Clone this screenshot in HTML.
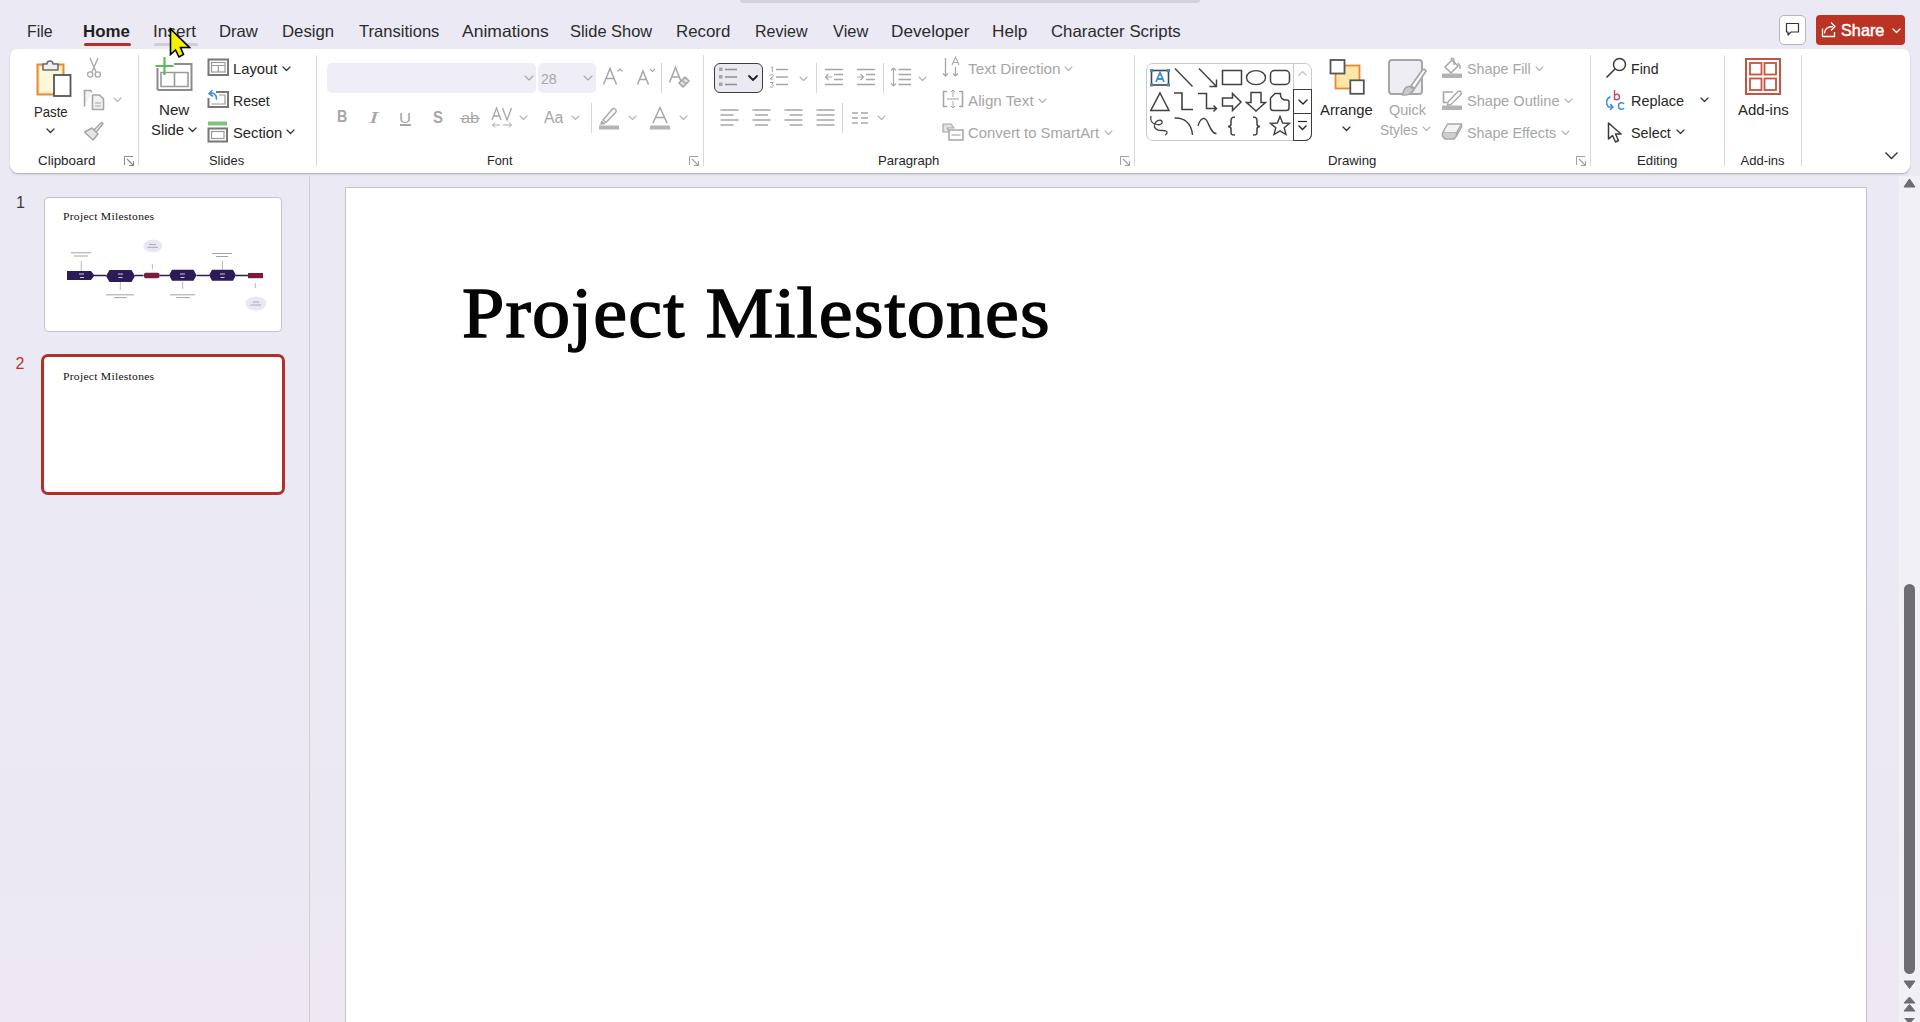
<!DOCTYPE html>
<html><head><meta charset="utf-8">
<style>
*{margin:0;padding:0;box-sizing:border-box}
html,body{width:1920px;height:1022px;overflow:hidden}
body{background:linear-gradient(#ebe9f4 0%,#ebe9f3 50%,#ede8f2 100%);font-family:"Liberation Sans",sans-serif;color:#262626;position:relative}
.a{position:absolute;white-space:nowrap}
svg.a{overflow:visible}
</style></head><body>
<div class="a" style="left:740px;top:0px;width:460px;height:3px;background:#d3d2d9;border-radius:0 0 3px 3px"></div>
<div class="a" style="left:26.54px;top:22.83px;font-size:16.5px;line-height:16.5px;color:#2b2b2b;font-weight:normal;font-family:'Liberation Sans',sans-serif;;transform-origin:0 0;transform:scaleX(0.9640);">File</div>
<div class="a" style="left:152.96px;top:22.83px;font-size:16.5px;line-height:16.5px;color:#2b2b2b;font-weight:normal;font-family:'Liberation Sans',sans-serif;;transform-origin:0 0;transform:scaleX(1.0415);">Insert</div>
<div class="a" style="left:219.49px;top:22.83px;font-size:16.5px;line-height:16.5px;color:#2b2b2b;font-weight:normal;font-family:'Liberation Sans',sans-serif;;transform-origin:0 0;transform:scaleX(1.0105);">Draw</div>
<div class="a" style="left:282.18px;top:22.83px;font-size:16.5px;line-height:16.5px;color:#2b2b2b;font-weight:normal;font-family:'Liberation Sans',sans-serif;;transform-origin:0 0;transform:scaleX(1.0160);">Design</div>
<div class="a" style="left:358.50px;top:22.83px;font-size:16.5px;line-height:16.5px;color:#2b2b2b;font-weight:normal;font-family:'Liberation Sans',sans-serif;;transform-origin:0 0;transform:scaleX(1.0038);">Transitions</div>
<div class="a" style="left:461.90px;top:22.83px;font-size:16.5px;line-height:16.5px;color:#2b2b2b;font-weight:normal;font-family:'Liberation Sans',sans-serif;;transform-origin:0 0;transform:scaleX(1.0617);">Animations</div>
<div class="a" style="left:570.20px;top:22.83px;font-size:16.5px;line-height:16.5px;color:#2b2b2b;font-weight:normal;font-family:'Liberation Sans',sans-serif;;transform-origin:0 0;transform:scaleX(0.9963);">Slide Show</div>
<div class="a" style="left:676.48px;top:22.83px;font-size:16.5px;line-height:16.5px;color:#2b2b2b;font-weight:normal;font-family:'Liberation Sans',sans-serif;;transform-origin:0 0;transform:scaleX(1.0216);">Record</div>
<div class="a" style="left:754.63px;top:22.83px;font-size:16.5px;line-height:16.5px;color:#2b2b2b;font-weight:normal;font-family:'Liberation Sans',sans-serif;;transform-origin:0 0;transform:scaleX(0.9698);">Review</div>
<div class="a" style="left:832.50px;top:22.83px;font-size:16.5px;line-height:16.5px;color:#2b2b2b;font-weight:normal;font-family:'Liberation Sans',sans-serif;;transform-origin:0 0;transform:scaleX(0.9944);">View</div>
<div class="a" style="left:890.86px;top:22.83px;font-size:16.5px;line-height:16.5px;color:#2b2b2b;font-weight:normal;font-family:'Liberation Sans',sans-serif;;transform-origin:0 0;transform:scaleX(1.0419);">Developer</div>
<div class="a" style="left:991.96px;top:22.83px;font-size:16.5px;line-height:16.5px;color:#2b2b2b;font-weight:normal;font-family:'Liberation Sans',sans-serif;;transform-origin:0 0;transform:scaleX(1.0394);">Help</div>
<div class="a" style="left:1051.28px;top:22.83px;font-size:16.5px;line-height:16.5px;color:#2b2b2b;font-weight:normal;font-family:'Liberation Sans',sans-serif;;transform-origin:0 0;transform:scaleX(1.0175);">Character Scripts</div>
<div class="a" style="left:83.48px;top:22.83px;font-size:16.5px;line-height:16.5px;color:#1f1f1f;font-weight:bold;font-family:'Liberation Sans',sans-serif;;transform-origin:0 0;transform:scaleX(1.0222);">Home</div>
<div class="a" style="left:84px;top:43px;width:47px;height:3px;background:#b3302b;border-radius:2px"></div>
<div class="a" style="left:154px;top:43px;width:44px;height:3px;background:#cfcdd6;border-radius:2px"></div>
<div class="a" style="left:1779px;top:15px;width:27px;height:30px;background:#fff;border:1px solid #b5b4ba;border-radius:5px"></div>
<svg class="a" style="left:1785px;top:22px;" width="16" height="16" viewBox="0 0 16 16" fill="none"><path d="M1.5 1.5 H13.5 V10 H6 L3 13 V10 H1.5 Z" stroke="#333" stroke-width="1.2" stroke-linejoin="round"/></svg>
<div class="a" style="left:1816px;top:15px;width:89px;height:30px;background:#bb3323;border-radius:4px"></div>
<svg class="a" style="left:1820px;top:20px;" width="18" height="18" viewBox="0 0 18 18" fill="none"><path d="M2.5 8.5 V16.5 H14.5 V12" stroke="#fff" stroke-width="1.3"/><path d="M4.5 13.5 C4.5 9 7.5 6.5 13 6.5" stroke="#fff" stroke-width="1.3"/><path d="M11 2.5 L15 6.5 L11 10.5" stroke="#fff" stroke-width="1.3" stroke-linejoin="round"/></svg>
<div class="a" style="left:1841.24px;top:21.91px;font-size:17px;line-height:17px;color:#ffffff;font-weight:normal;font-family:'Liberation Sans',sans-serif;-webkit-text-stroke:0.5px #fff;transform-origin:0 0;transform:scaleX(0.9568);">Share</div>
<svg class="a" style="left:1892.0px;top:27.75px;" width="9" height="5.5" viewBox="0 0 9 5.5" fill="none"><path d="M1 1 L4.5 4.5 L8 1" stroke="#fff" stroke-width="1.3" stroke-linecap="round" stroke-linejoin="round"/></svg>
<div class="a" style="left:10px;top:49px;width:1900px;height:124px;background:#fff;border-radius:8px;box-shadow:0 1px 1px rgba(0,0,0,0.18),0 2px 3px rgba(0,0,0,0.08)"></div>
<div class="a" style="left:138px;top:55px;width:1px;height:111px;background:#d9d9dd"></div>
<div class="a" style="left:316px;top:55px;width:1px;height:111px;background:#d9d9dd"></div>
<div class="a" style="left:703px;top:55px;width:1px;height:111px;background:#d9d9dd"></div>
<div class="a" style="left:1134px;top:55px;width:1px;height:111px;background:#d9d9dd"></div>
<div class="a" style="left:1590px;top:55px;width:1px;height:111px;background:#d9d9dd"></div>
<div class="a" style="left:1724px;top:55px;width:1px;height:111px;background:#d9d9dd"></div>
<div class="a" style="left:1801px;top:55px;width:1px;height:111px;background:#d9d9dd"></div>
<svg class="a" style="left:36px;top:58px;" width="36" height="40" viewBox="0 0 36 40" fill="none">
<rect x="1.5" y="6.5" width="26" height="30" fill="#fbe9b8" stroke="#e38b3c" stroke-width="2"/>
<rect x="4" y="9" width="21" height="25" fill="#fff7dc" stroke="none"/>
<path d="M7 12 V6 H11 C11 2 17 2 17 6 H22 V12 Z" fill="#f0f0f0" stroke="#6b6b6b" stroke-width="1.6" stroke-linejoin="round"/>
<rect x="18" y="17" width="16.5" height="21" fill="#fff" stroke="#555" stroke-width="1.8"/>
</svg>
<div class="a" style="left:34.02px;top:103.80px;font-size:15px;line-height:15px;color:#262626;font-weight:normal;font-family:'Liberation Sans',sans-serif;;transform-origin:0 0;transform:scaleX(0.8757);">Paste</div>
<svg class="a" style="left:46.0px;top:127.75px;" width="9" height="5.5" viewBox="0 0 9 5.5" fill="none"><path d="M1 1 L4.5 4.5 L8 1" stroke="#333" stroke-width="1.3" stroke-linecap="round" stroke-linejoin="round"/></svg>
<svg class="a" style="left:86px;top:57px;" width="16" height="22" viewBox="0 0 16 22" fill="none">
<path d="M4 1 L10 15 M12 1 L6 15" stroke="#a6a6a6" stroke-width="1.3"/>
<circle cx="4.2" cy="17.5" r="2.6" stroke="#a6a6a6" stroke-width="1.3"/>
<circle cx="11.8" cy="17.5" r="2.6" stroke="#a6a6a6" stroke-width="1.3"/></svg>
<svg class="a" style="left:83px;top:89px;" width="23" height="23" viewBox="0 0 23 23" fill="none">
<path d="M1.5 17.5 V1.5 H7.5 L9 3" stroke="#a6a6a6" stroke-width="1.6" fill="#f2f2f2"/>
<path d="M9.5 20.5 V6 H16.5 L20.5 10 V20.5 Z" stroke="#a6a6a6" stroke-width="1.6" fill="#f2f2f2" stroke-linejoin="round"/>
<path d="M12 14 H18 M12 17 H18" stroke="#a6a6a6" stroke-width="1.2"/></svg>
<svg class="a" style="left:113.3px;top:96.85px;" width="9" height="5.5" viewBox="0 0 9 5.5" fill="none"><path d="M1 1 L4.5 4.5 L8 1" stroke="#b5b5b5" stroke-width="1.1" stroke-linecap="round" stroke-linejoin="round"/></svg>
<svg class="a" style="left:83px;top:121px;" width="22" height="20" viewBox="0 0 22 20" fill="none">
<path d="M1.5 11 L9 7 L15 13 L10 19 Z" fill="#e6e6e6" stroke="#a6a6a6" stroke-width="1.5" stroke-linejoin="round"/>
<path d="M11 9 L18 2 C19 1 20.5 2.5 19.5 3.5 L13 11" stroke="#a6a6a6" stroke-width="1.6"/></svg>
<div class="a" style="left:37.60px;top:153.80px;font-size:13px;line-height:13px;color:#262626;font-weight:normal;font-family:'Liberation Sans',sans-serif;;transform-origin:0 0;transform:scaleX(1.0309);">Clipboard</div>
<svg class="a" style="left:123.5px;top:155.5px;" width="11" height="11" viewBox="0 0 11 11" fill="none"><path d="M0.5 9 V0.5 H9" stroke="#8a8a8a" stroke-width="1"/><path d="M3 3 L9.5 9.5 M5 9.5 H9.5 V5" stroke="#8a8a8a" stroke-width="1.1"/></svg>
<svg class="a" style="left:154px;top:56px;" width="40" height="36" viewBox="0 0 40 36" fill="none">
<path d="M3.5 34 V12 M3.5 34 H37.5 V8 H20" stroke="#8c8c8c" stroke-width="2"/>
<path d="M7 30.5 V16.5 H34 V30.5 Z M7 16.5 M20.5 16.5 V30.5" stroke="#9a9a9a" stroke-width="1.6"/>
<path d="M10.5 1 V19 M1.5 10 H19.5" stroke="#5fb760" stroke-width="2.2"/></svg>
<div class="a" style="left:159.39px;top:101.60px;font-size:15px;line-height:15px;color:#262626;font-weight:normal;font-family:'Liberation Sans',sans-serif;;transform-origin:0 0;transform:scaleX(1.0103);">New</div>
<div class="a" style="left:150.51px;top:122.00px;font-size:15px;line-height:15px;color:#262626;font-weight:normal;font-family:'Liberation Sans',sans-serif;;transform-origin:0 0;transform:scaleX(0.9938);">Slide</div>
<svg class="a" style="left:188.0px;top:127.44999999999999px;" width="9" height="5.5" viewBox="0 0 9 5.5" fill="none"><path d="M1 1 L4.5 4.5 L8 1" stroke="#333" stroke-width="1.2" stroke-linecap="round" stroke-linejoin="round"/></svg>
<svg class="a" style="left:207px;top:58px;" width="23" height="19" viewBox="0 0 23 19" fill="none">
<rect x="1.5" y="1.5" width="19.5" height="15.5" stroke="#777" stroke-width="2"/>
<rect x="4.5" y="4.5" width="13.5" height="9.5" stroke="#999" stroke-width="1.2"/>
<path d="M4.5 7.5 H18 M11.25 7.5 V14" stroke="#999" stroke-width="1.2"/></svg>
<div class="a" style="left:232.62px;top:61.30px;font-size:15px;line-height:15px;color:#262626;font-weight:normal;font-family:'Liberation Sans',sans-serif;;transform-origin:0 0;transform:scaleX(0.9841);">Layout</div>
<svg class="a" style="left:281.5px;top:65.75px;" width="9" height="5.5" viewBox="0 0 9 5.5" fill="none"><path d="M1 1 L4.5 4.5 L8 1" stroke="#333" stroke-width="1.2" stroke-linecap="round" stroke-linejoin="round"/></svg>
<svg class="a" style="left:207px;top:89px;" width="23" height="20" viewBox="0 0 23 20" fill="none">
<path d="M9 3 H21 V18 H1.5 V9" stroke="#777" stroke-width="2"/>
<path d="M4.5 15 H18 V6 H12" stroke="#999" stroke-width="1.2"/>
<path d="M9.5 10 C9.5 5 6 3 2.5 4.5 M2 4.5 L5 1.5 M2 4.5 L5.5 7" stroke="#3b8fd1" stroke-width="1.6" stroke-linecap="round"/></svg>
<div class="a" style="left:232.66px;top:92.90px;font-size:15px;line-height:15px;color:#262626;font-weight:normal;font-family:'Liberation Sans',sans-serif;;transform-origin:0 0;transform:scaleX(0.9368);">Reset</div>
<svg class="a" style="left:207px;top:121px;" width="23" height="22" viewBox="0 0 23 22" fill="none">
<rect x="1" y="0.5" width="19" height="4" fill="#7cc47e"/>
<rect x="1.5" y="7.5" width="18.5" height="13" stroke="#777" stroke-width="2"/>
<rect x="4.5" y="10.5" width="12.5" height="7" stroke="#999" stroke-width="1.2"/></svg>
<div class="a" style="left:232.61px;top:124.80px;font-size:15px;line-height:15px;color:#262626;font-weight:normal;font-family:'Liberation Sans',sans-serif;;transform-origin:0 0;transform:scaleX(0.9857);">Section</div>
<svg class="a" style="left:285.5px;top:129.25px;" width="9" height="5.5" viewBox="0 0 9 5.5" fill="none"><path d="M1 1 L4.5 4.5 L8 1" stroke="#333" stroke-width="1.2" stroke-linecap="round" stroke-linejoin="round"/></svg>
<div class="a" style="left:209.01px;top:153.80px;font-size:13px;line-height:13px;color:#262626;font-weight:normal;font-family:'Liberation Sans',sans-serif;;transform-origin:0 0;transform:scaleX(0.9941);">Slides</div>
<div class="a" style="left:327px;top:63px;width:209px;height:30px;background:#efedf5;border-radius:5px"></div>
<svg class="a" style="left:523.5px;top:74.5px;" width="10" height="6.0" viewBox="0 0 10 6.0" fill="none"><path d="M1 1 L5.0 5.0 L9 1" stroke="#a8a8a8" stroke-width="1.1" stroke-linecap="round" stroke-linejoin="round"/></svg>
<div class="a" style="left:538px;top:63px;width:58px;height:30px;background:#efedf5;border-radius:5px"></div>
<div class="a" style="left:541.40px;top:71.30px;font-size:15px;line-height:15px;color:#a8a8a8;font-weight:normal;font-family:'Liberation Sans',sans-serif;;transform-origin:0 0;transform:scaleX(0.9438);">28</div>
<svg class="a" style="left:582.5px;top:74.5px;" width="10" height="6.0" viewBox="0 0 10 6.0" fill="none"><path d="M1 1 L5.0 5.0 L9 1" stroke="#a8a8a8" stroke-width="1.1" stroke-linecap="round" stroke-linejoin="round"/></svg>
<svg class="a" style="left:602px;top:66px;" width="22" height="20" viewBox="0 0 22 20" fill="none"><path d="M1.5 18.5 L8 2.5 L14.5 18.5 M4 12.5 H12" stroke="#a6a6a6" stroke-width="1.5"/><path d="M15.5 5.5 L18 3 L20.5 5.5" stroke="#a6a6a6" stroke-width="1.1"/></svg>
<svg class="a" style="left:636px;top:66px;" width="22" height="20" viewBox="0 0 22 20" fill="none"><path d="M1.5 18.5 L7 5 L12.5 18.5 M3.5 13.5 H10.5" stroke="#a6a6a6" stroke-width="1.5"/><path d="M14 3 L16.5 5.5 L19 3" stroke="#a6a6a6" stroke-width="1.1"/></svg>
<div class="a" style="left:661px;top:63px;width:1px;height:30px;background:#d4d4d8"></div>
<svg class="a" style="left:668px;top:66px;" width="23" height="24" viewBox="0 0 23 24" fill="none"><path d="M1.5 16.5 L7.5 1.5 L13.5 16.5 M3.5 11 H11.5" stroke="#a6a6a6" stroke-width="1.5"/><path d="M11 17 L17 11 L21 15 L15 21 Z M14 14 L18 18" stroke="#a6a6a6" stroke-width="1.6" fill="#e3e3e3" stroke-linejoin="round"/></svg>
<div class="a" style="left:337.01px;top:109.46px;font-size:16px;line-height:16px;color:#a6a6a6;font-weight:bold;font-family:'Liberation Sans',sans-serif;;transform-origin:0 0;transform:scaleX(0.8900);">B</div>
<div class="a" style="left:368.50px;top:108.61px;font-size:17px;line-height:17px;color:#a6a6a6;font-weight:normal;font-family:'Liberation Serif',serif;font-style:italic;transform-origin:0 0;transform:scaleX(1.6667);">I</div>
<div class="a" style="left:399.39px;top:110.30px;font-size:15px;line-height:15px;color:#a6a6a6;font-weight:normal;font-family:'Liberation Sans',sans-serif;;transform-origin:0 0;transform:scaleX(1.1111);">U</div>
<div class="a" style="left:400px;top:124px;width:11px;height:1.5px;background:#a6a6a6"></div>
<div class="a" style="left:432.70px;top:109.96px;font-size:16px;line-height:16px;color:#a6a6a6;font-weight:bold;font-family:'Liberation Sans',sans-serif;;transform-origin:0 0;transform:scaleX(0.9300);">S</div>
<div class="a" style="left:461.00px;top:110.30px;font-size:15px;line-height:15px;color:#a6a6a6;font-weight:normal;font-family:'Liberation Sans',sans-serif;;transform-origin:0 0;transform:scaleX(1.0938);">ab</div>
<div class="a" style="left:460px;top:117.5px;width:20px;height:1.3px;background:#a6a6a6"></div>
<svg class="a" style="left:491px;top:107px;" width="23" height="22" viewBox="0 0 23 22" fill="none"><path d="M1 13 L5.5 1 L10 13 M3 9 H8 M11.5 1 L16 13 L20.5 1" stroke="#a6a6a6" stroke-width="1.3"/><path d="M1.5 18 H9 M1.5 18 L4 15.5 M1.5 18 L4 20.5 M12 18 H20.5 M20.5 18 L18 15.5 M20.5 18 L18 20.5" stroke="#a6a6a6" stroke-width="1"/></svg>
<svg class="a" style="left:518.5px;top:114.75px;" width="9" height="5.5" viewBox="0 0 9 5.5" fill="none"><path d="M1 1 L4.5 4.5 L8 1" stroke="#b5b5b5" stroke-width="1.1" stroke-linecap="round" stroke-linejoin="round"/></svg>
<div class="a" style="left:544.30px;top:109.96px;font-size:16px;line-height:16px;color:#a6a6a6;font-weight:normal;font-family:'Liberation Sans',sans-serif;;transform-origin:0 0;transform:scaleX(0.9850);">Aa</div>
<svg class="a" style="left:570.5px;top:114.75px;" width="9" height="5.5" viewBox="0 0 9 5.5" fill="none"><path d="M1 1 L4.5 4.5 L8 1" stroke="#b5b5b5" stroke-width="1.1" stroke-linecap="round" stroke-linejoin="round"/></svg>
<div class="a" style="left:591px;top:103px;width:1px;height:30px;background:#d4d4d8"></div>
<svg class="a" style="left:598px;top:106px;" width="24" height="24" viewBox="0 0 24 24" fill="none"><path d="M5 14 L14.5 3 C15.5 2 17.5 2.5 18 4 C18.5 5 18 6 17.5 6.5 L8 16.5 Z" stroke="#a6a6a6" stroke-width="1.4" fill="#fff"/><path d="M4 15 L3 18 L7 17.5" stroke="#a6a6a6" stroke-width="1.4" fill="#a6a6a6"/><rect x="1" y="19.5" width="20" height="4" fill="#b4b4b4"/></svg>
<svg class="a" style="left:627.5px;top:114.75px;" width="9" height="5.5" viewBox="0 0 9 5.5" fill="none"><path d="M1 1 L4.5 4.5 L8 1" stroke="#b5b5b5" stroke-width="1.1" stroke-linecap="round" stroke-linejoin="round"/></svg>
<svg class="a" style="left:649px;top:106px;" width="24" height="24" viewBox="0 0 24 24" fill="none"><path d="M4 17 L11 1.5 L18 17 M6.5 11.5 H15.5" stroke="#a6a6a6" stroke-width="1.5"/><rect x="1" y="19.5" width="20" height="4" fill="#b4b4b4"/></svg>
<svg class="a" style="left:678.5px;top:114.75px;" width="9" height="5.5" viewBox="0 0 9 5.5" fill="none"><path d="M1 1 L4.5 4.5 L8 1" stroke="#b5b5b5" stroke-width="1.1" stroke-linecap="round" stroke-linejoin="round"/></svg>
<div class="a" style="left:486.62px;top:153.80px;font-size:13px;line-height:13px;color:#262626;font-weight:normal;font-family:'Liberation Sans',sans-serif;;transform-origin:0 0;transform:scaleX(0.9800);">Font</div>
<svg class="a" style="left:689px;top:155.5px;" width="11" height="11" viewBox="0 0 11 11" fill="none"><path d="M0.5 9 V0.5 H9" stroke="#a0a0a0" stroke-width="1"/><path d="M3 3 L9.5 9.5 M5 9.5 H9.5 V5" stroke="#a0a0a0" stroke-width="1.1"/></svg>
<div class="a" style="left:714px;top:63px;width:49px;height:30px;background:#ebe9f1;border:1.3px solid #3d3d3d;border-radius:6px"></div>
<svg class="a" style="left:718px;top:66px;" width="24" height="24" viewBox="0 0 24 24" fill="none"><rect x="1" y="1.5" width="3.5" height="3.5" fill="#a5a5a5"/><rect x="1" y="9" width="3.5" height="3.5" fill="#a5a5a5"/><rect x="1" y="16.5" width="3.5" height="3.5" fill="#a5a5a5"/><path d="M7 3.5 H19 M7 11 H19 M7 18.5 H19" stroke="#8f8f8f" stroke-width="1.3"/></svg>
<svg class="a" style="left:747.5px;top:75.0px;" width="10" height="6.0" viewBox="0 0 10 6.0" fill="none"><path d="M1 1 L5.0 5.0 L9 1" stroke="#222" stroke-width="1.8" stroke-linecap="round" stroke-linejoin="round"/></svg>
<svg class="a" style="left:769px;top:66px;" width="22" height="24" viewBox="0 0 22 24" fill="none"><path d="M2 1.5 L3.3 0.8 V6 M1 10 C1 8 4.5 8 4.5 10 L1 13 H4.5 M1 16.5 H4.5 L2.5 18.5 C5 18.5 5 22 1 21" stroke="#a6a6a6" stroke-width="1"/><path d="M7 3.5 H19 M7 11 H19 M7 18.5 H19" stroke="#a6a6a6" stroke-width="1.3"/></svg>
<svg class="a" style="left:799.0px;top:75.75px;" width="9" height="5.5" viewBox="0 0 9 5.5" fill="none"><path d="M1 1 L4.5 4.5 L8 1" stroke="#b5b5b5" stroke-width="1.1" stroke-linecap="round" stroke-linejoin="round"/></svg>
<div class="a" style="left:816px;top:63px;width:1px;height:30px;background:#d4d4d8"></div>
<svg class="a" style="left:824px;top:66px;" width="21" height="24" viewBox="0 0 21 24" fill="none"><path d="M1 3.5 H19 M10 8.5 H19 M10 13.5 H19 M1 18.5 H19" stroke="#a6a6a6" stroke-width="1.3"/><path d="M8 11 H1.5 M4.5 8 L1.5 11 L4.5 14" stroke="#a6a6a6" stroke-width="1.1"/></svg>
<svg class="a" style="left:856px;top:66px;" width="21" height="24" viewBox="0 0 21 24" fill="none"><path d="M1 3.5 H19 M10 8.5 H19 M10 13.5 H19 M1 18.5 H19" stroke="#a6a6a6" stroke-width="1.3"/><path d="M1 11 H7.5 M4.5 8 L7.5 11 L4.5 14" stroke="#a6a6a6" stroke-width="1.1"/></svg>
<div class="a" style="left:883px;top:63px;width:1px;height:30px;background:#d4d4d8"></div>
<svg class="a" style="left:890px;top:66px;" width="23" height="24" viewBox="0 0 23 24" fill="none"><path d="M8.5 3.5 H21 M8.5 8.5 H21 M8.5 13.5 H21 M8.5 18.5 H21" stroke="#a6a6a6" stroke-width="1.3"/><path d="M3.5 2 V20 M1 4.5 L3.5 2 L6 4.5 M1 17.5 L3.5 20 L6 17.5" stroke="#a6a6a6" stroke-width="1.1"/></svg>
<svg class="a" style="left:918.0px;top:75.75px;" width="9" height="5.5" viewBox="0 0 9 5.5" fill="none"><path d="M1 1 L4.5 4.5 L8 1" stroke="#b5b5b5" stroke-width="1.1" stroke-linecap="round" stroke-linejoin="round"/></svg>
<svg class="a" style="left:720px;top:107px;" width="20" height="23" viewBox="0 0 20 23" fill="none"><path d="M0.5 3 H18.5 M0.5 8 H13.5 M0.5 13 H18.5 M0.5 18 H13.5 " stroke="#a6a6a6" stroke-width="1.3"/></svg>
<svg class="a" style="left:752px;top:107px;" width="20" height="23" viewBox="0 0 20 23" fill="none"><path d="M0.5 3 H18.5 M3.0 8 H16.0 M0.5 13 H18.5 M3.0 18 H16.0 " stroke="#a6a6a6" stroke-width="1.3"/></svg>
<svg class="a" style="left:784px;top:107px;" width="20" height="23" viewBox="0 0 20 23" fill="none"><path d="M0.5 3 H18.5 M5.5 8 H18.5 M0.5 13 H18.5 M5.5 18 H18.5 " stroke="#a6a6a6" stroke-width="1.3"/></svg>
<svg class="a" style="left:816px;top:107px;" width="20" height="23" viewBox="0 0 20 23" fill="none"><path d="M0.5 3 H18.5 M0.5 8 H18.5 M0.5 13 H18.5 M0.5 18 H18.5 " stroke="#a6a6a6" stroke-width="1.3"/></svg>
<div class="a" style="left:842px;top:103px;width:1px;height:30px;background:#d4d4d8"></div>
<svg class="a" style="left:851px;top:110px;" width="19" height="16" viewBox="0 0 19 16" fill="none"><path d="M1 3 H7 M10 3 H17 M1 8 H7 M10 8 H17 M1 13 H7 M10 13 H17" stroke="#a6a6a6" stroke-width="1.3"/></svg>
<svg class="a" style="left:877.0px;top:115.25px;" width="9" height="5.5" viewBox="0 0 9 5.5" fill="none"><path d="M1 1 L4.5 4.5 L8 1" stroke="#b5b5b5" stroke-width="1.1" stroke-linecap="round" stroke-linejoin="round"/></svg>
<svg class="a" style="left:942px;top:56px;" width="22" height="23" viewBox="0 0 22 23" fill="none"><path d="M3.5 2 V20 M1 17.5 L3.5 20 L6 17.5" stroke="#a6a6a6" stroke-width="1.3"/><path d="M10 9 L13.5 1 L17 9 M11 6.5 H16" stroke="#a6a6a6" stroke-width="1.1"/><path d="M13.5 11 V20 M11 17.5 L13.5 20 L16 17.5" stroke="#a6a6a6" stroke-width="1.2"/></svg>
<div class="a" style="left:968.00px;top:61.30px;font-size:15px;line-height:15px;color:#a6a6a6;font-weight:normal;font-family:'Liberation Sans',sans-serif;;transform-origin:0 0;transform:scaleX(1.0189);">Text Direction</div>
<svg class="a" style="left:1064.0px;top:65.75px;" width="9" height="5.5" viewBox="0 0 9 5.5" fill="none"><path d="M1 1 L4.5 4.5 L8 1" stroke="#b5b5b5" stroke-width="1.1" stroke-linecap="round" stroke-linejoin="round"/></svg>
<svg class="a" style="left:942px;top:89px;" width="23" height="21" viewBox="0 0 23 21" fill="none"><path d="M5 2.5 H1.5 V17.5 H5 M17 2.5 H20.5 V17.5 H17" stroke="#a6a6a6" stroke-width="1.6"/><path d="M5 10 H17" stroke="#a6a6a6" stroke-width="1.1"/><path d="M11 1 V8 M9 3 L11 1 L13 3 M11 12 V19 M9 17 L11 19 L13 17" stroke="#a6a6a6" stroke-width="1"/></svg>
<div class="a" style="left:968.00px;top:92.90px;font-size:15px;line-height:15px;color:#a6a6a6;font-weight:normal;font-family:'Liberation Sans',sans-serif;;transform-origin:0 0;transform:scaleX(1.0138);">Align Text</div>
<svg class="a" style="left:1038.0px;top:97.75px;" width="9" height="5.5" viewBox="0 0 9 5.5" fill="none"><path d="M1 1 L4.5 4.5 L8 1" stroke="#b5b5b5" stroke-width="1.1" stroke-linecap="round" stroke-linejoin="round"/></svg>
<svg class="a" style="left:942px;top:123px;" width="23" height="19" viewBox="0 0 23 19" fill="none"><path d="M1 1 H9 L12 5 H5 L8 9 H1 Z" fill="#e2e2e2" stroke="#a6a6a6" stroke-width="1.2" stroke-linejoin="round"/><rect x="7" y="7" width="14" height="10" stroke="#a6a6a6" stroke-width="1.5" fill="#fff"/><path d="M9.5 12 H18.5" stroke="#a6a6a6" stroke-width="1.1"/></svg>
<div class="a" style="left:968.00px;top:124.80px;font-size:15px;line-height:15px;color:#a6a6a6;font-weight:normal;font-family:'Liberation Sans',sans-serif;;transform-origin:0 0;transform:scaleX(0.9895);">Convert to SmartArt</div>
<svg class="a" style="left:1104.0px;top:129.75px;" width="9" height="5.5" viewBox="0 0 9 5.5" fill="none"><path d="M1 1 L4.5 4.5 L8 1" stroke="#b5b5b5" stroke-width="1.1" stroke-linecap="round" stroke-linejoin="round"/></svg>
<div class="a" style="left:877.74px;top:153.80px;font-size:13px;line-height:13px;color:#262626;font-weight:normal;font-family:'Liberation Sans',sans-serif;;transform-origin:0 0;transform:scaleX(1.0110);">Paragraph</div>
<svg class="a" style="left:1120px;top:155.5px;" width="11" height="11" viewBox="0 0 11 11" fill="none"><path d="M0.5 9 V0.5 H9" stroke="#a0a0a0" stroke-width="1"/><path d="M3 3 L9.5 9.5 M5 9.5 H9.5 V5" stroke="#a0a0a0" stroke-width="1.1"/></svg>
<div class="a" style="left:1146px;top:63px;width:166px;height:78px;border:1px solid #c9c9ce;border-radius:7px;background:#fff"></div>
<div class="a" style="left:1293px;top:63px;width:1px;height:27px;background:#c9c9ce"></div>
<div class="a" style="left:1293px;top:89px;width:19px;height:25px;border:1.3px solid #3c3c3c;border-radius:0"></div>
<div class="a" style="left:1293px;top:113px;width:19px;height:28px;border:1.3px solid #3c3c3c;border-top:none;border-radius:0 0 7px 0"></div>
<svg class="a" style="left:1297px;top:70px;" width="11" height="7" viewBox="0 0 11 7" fill="none"><path d="M1.5 5.5 L5.5 1.5 L9.5 5.5" stroke="#c0c0c0" stroke-width="1.1"/></svg>
<svg class="a" style="left:1297.5px;top:98.5px;" width="10" height="6.0" viewBox="0 0 10 6.0" fill="none"><path d="M1 1 L5.0 5.0 L9 1" stroke="#2a2a2a" stroke-width="1.4" stroke-linecap="round" stroke-linejoin="round"/></svg>
<svg class="a" style="left:1297px;top:120px;" width="11" height="12" viewBox="0 0 11 12" fill="none"><path d="M1 1.5 H10" stroke="#2a2a2a" stroke-width="1.2"/><path d="M1.5 5.5 L5.5 9.5 L9.5 5.5" stroke="#2a2a2a" stroke-width="1.4"/></svg>
<svg class="a" style="left:1149px;top:68px;" width="22" height="20" viewBox="0 0 22 20" fill="none"><rect x="2.5" y="2.5" width="17" height="14.5" stroke="#444" stroke-width="1.6"/><path d="M7 14 L11 4.5 L15 14 M8.3 11 H13.7" stroke="#3a8ed4" stroke-width="1.8"/><rect x="1" y="1" width="3.2" height="3.2" fill="#3a8ed4"/><rect x="17.8" y="1" width="3.2" height="3.2" fill="#3a8ed4"/><rect x="1" y="15.3" width="3.2" height="3.2" fill="#3a8ed4"/><rect x="17.8" y="15.3" width="3.2" height="3.2" fill="#3a8ed4"/></svg>
<svg class="a" style="left:1173px;top:67px;" width="22" height="21" viewBox="0 0 22 21" fill="none"><path d="M2 1.5 L19.5 19.5" stroke="#404040" stroke-width="1.4"/></svg>
<svg class="a" style="left:1197px;top:67px;" width="22" height="21" viewBox="0 0 22 21" fill="none"><path d="M2 1.5 L19.5 19.5 M19.5 12.5 V19.5 H12.5" stroke="#404040" stroke-width="1.4"/></svg>
<svg class="a" style="left:1221px;top:69px;" width="22" height="18" viewBox="0 0 22 18" fill="none"><rect x="1.5" y="1.5" width="19" height="14" stroke="#404040" stroke-width="1.5"/></svg>
<svg class="a" style="left:1245px;top:69px;" width="22" height="18" viewBox="0 0 22 18" fill="none"><ellipse cx="11" cy="8.6" rx="9.5" ry="7" stroke="#404040" stroke-width="1.4"/></svg>
<svg class="a" style="left:1269px;top:69px;" width="22" height="18" viewBox="0 0 22 18" fill="none"><rect x="1.5" y="1.5" width="19" height="14" rx="4" stroke="#404040" stroke-width="1.5"/></svg>
<svg class="a" style="left:1149px;top:91px;" width="22" height="21" viewBox="0 0 22 21" fill="none"><path d="M11 2 L20 19.5 H1.8 Z" stroke="#404040" stroke-width="1.5" stroke-linejoin="miter"/></svg>
<svg class="a" style="left:1173px;top:92px;" width="22" height="20" viewBox="0 0 22 20" fill="none"><path d="M1 1 H9 V17.5 H20" stroke="#404040" stroke-width="1.6"/></svg>
<svg class="a" style="left:1197px;top:92px;" width="22" height="20" viewBox="0 0 22 20" fill="none"><path d="M1 1.5 H9.5 V16.5 H19.5 M16.5 13.5 L19.5 16.5 L16.5 19.5" stroke="#404040" stroke-width="1.5"/></svg>
<svg class="a" style="left:1221px;top:92px;" width="22" height="20" viewBox="0 0 22 20" fill="none"><path d="M1.5 6 H11.5 V1.5 L20 10 L11.5 18.5 V14 H1.5 Z" stroke="#404040" stroke-width="1.5" stroke-linejoin="miter"/></svg>
<svg class="a" style="left:1245px;top:91px;" width="22" height="21" viewBox="0 0 22 21" fill="none"><path d="M6 1.5 H16 V11.5 H20.5 L11 20 L1.5 11.5 H6 Z" stroke="#404040" stroke-width="1.5" stroke-linejoin="miter"/></svg>
<svg class="a" style="left:1269px;top:92px;" width="22" height="20" viewBox="0 0 22 20" fill="none"><path d="M6 1.5 H11.5 C11 6 14 8.5 18 8 C19.5 8 20 9 20 10 V16 C20 17.5 19 18.5 17.5 18.5 H4 C2.5 18.5 1.5 17.5 1.5 16 V6 Z" stroke="#404040" stroke-width="1.5"/></svg>
<svg class="a" style="left:1149px;top:115px;" width="22" height="21" viewBox="0 0 22 21" fill="none"><path d="M2 1 C1 5 3 8 6 9 C9 10 12 10 13 8 C14 5 10 4 7 7 C4 10 5 14 9 15 C12 16 15 15 17 16 C19 17 18 19 16 20" stroke="#404040" stroke-width="1.3"/></svg>
<svg class="a" style="left:1173px;top:116px;" width="22" height="20" viewBox="0 0 22 20" fill="none"><path d="M1.5 2 C10 1.5 18.5 6 19.5 19" stroke="#404040" stroke-width="1.4"/></svg>
<svg class="a" style="left:1197px;top:116px;" width="22" height="20" viewBox="0 0 22 20" fill="none"><path d="M1 10 C3 3 7 0 10 5 C13 11 15 18 19.5 17.5" stroke="#404040" stroke-width="1.4"/></svg>
<svg class="a" style="left:1221px;top:116px;" width="22" height="20" viewBox="0 0 22 20" fill="none"><path d="M14 1 C10 1 10 3 10 5.5 V8 C10 9.5 9 10.5 7 10.5 C9 10.5 10 11.5 10 13 V15.5 C10 18 10 19 14 19" stroke="#404040" stroke-width="1.5"/></svg>
<svg class="a" style="left:1245px;top:116px;" width="22" height="20" viewBox="0 0 22 20" fill="none"><path d="M8 1 C12 1 12 3 12 5.5 V8 C12 9.5 13 10.5 15 10.5 C13 10.5 12 11.5 12 13 V15.5 C12 18 12 19 8 19" stroke="#404040" stroke-width="1.5"/></svg>
<svg class="a" style="left:1269px;top:115px;" width="22" height="21" viewBox="0 0 22 21" fill="none"><path d="M11 1.5 L13.6 8 L20.5 8.4 L15.2 12.8 L17 19.5 L11 15.8 L5 19.5 L6.8 12.8 L1.5 8.4 L8.4 8 Z" stroke="#404040" stroke-width="1.4" stroke-linejoin="miter"/></svg>
<svg class="a" style="left:1328px;top:58px;" width="38" height="38" viewBox="0 0 38 38" fill="none">
<rect x="7.5" y="7.5" width="24" height="23" fill="#fbe7a6" stroke="#e8843c" stroke-width="1.8"/>
<rect x="2.5" y="2" width="14" height="13.5" fill="#fff" stroke="#555" stroke-width="1.8"/>
<rect x="22.3" y="22.3" width="13.5" height="13.5" fill="#fff" stroke="#555" stroke-width="1.8"/></svg>
<div class="a" style="left:1320.20px;top:101.90px;font-size:15px;line-height:15px;color:#262626;font-weight:normal;font-family:'Liberation Sans',sans-serif;;transform-origin:0 0;transform:scaleX(0.9906);">Arrange</div>
<svg class="a" style="left:1341.5px;top:125.75px;" width="9" height="5.5" viewBox="0 0 9 5.5" fill="none"><path d="M1 1 L4.5 4.5 L8 1" stroke="#333" stroke-width="1.3" stroke-linecap="round" stroke-linejoin="round"/></svg>
<svg class="a" style="left:1387px;top:58px;" width="42" height="41" viewBox="0 0 42 41" fill="none">
<rect x="2" y="2" width="33" height="34" rx="3" fill="#eeedf3" stroke="#a6a6a6" stroke-width="2"/>
<path d="M39 13 C38 11 36 11 35 12.5 L24 28 L27.5 30.5 Z" fill="#fff" stroke="#a6a6a6" stroke-width="1.8"/>
<path d="M23 28.5 C19 28 16.5 31 15.5 37 C20 37.5 25.5 36 27 31 Z" fill="#c9c9c9" stroke="#a6a6a6" stroke-width="1.5"/></svg>
<div class="a" style="left:1388.50px;top:101.90px;font-size:15px;line-height:15px;color:#a6a6a6;font-weight:normal;font-family:'Liberation Sans',sans-serif;;transform-origin:0 0;transform:scaleX(0.9658);">Quick</div>
<div class="a" style="left:1380.08px;top:121.90px;font-size:15px;line-height:15px;color:#a6a6a6;font-weight:normal;font-family:'Liberation Sans',sans-serif;;transform-origin:0 0;transform:scaleX(0.9200);">Styles</div>
<svg class="a" style="left:1422.0px;top:126.05000000000001px;" width="9" height="5.5" viewBox="0 0 9 5.5" fill="none"><path d="M1 1 L4.5 4.5 L8 1" stroke="#b5b5b5" stroke-width="1.1" stroke-linecap="round" stroke-linejoin="round"/></svg>
<svg class="a" style="left:1441px;top:57px;" width="23" height="22" viewBox="0 0 23 22" fill="none"><path d="M4 10 L11 3 L17 9 L10 16 Z" stroke="#a6a6a6" stroke-width="1.5" fill="#fff" stroke-linejoin="round"/><path d="M10 3 C10 0.5 13 0.5 13 3 V8" stroke="#a6a6a6" stroke-width="1.4"/><path d="M17 6 L19 9 V12" stroke="#a6a6a6" stroke-width="1.4"/><rect x="1" y="16.5" width="20" height="4.5" fill="#b3b3b3"/></svg>
<div class="a" style="left:1466.94px;top:61.30px;font-size:15px;line-height:15px;color:#a6a6a6;font-weight:normal;font-family:'Liberation Sans',sans-serif;;transform-origin:0 0;transform:scaleX(0.9554);">Shape Fill</div>
<svg class="a" style="left:1534.5px;top:65.75px;" width="9" height="5.5" viewBox="0 0 9 5.5" fill="none"><path d="M1 1 L4.5 4.5 L8 1" stroke="#b5b5b5" stroke-width="1.1" stroke-linecap="round" stroke-linejoin="round"/></svg>
<svg class="a" style="left:1441px;top:89px;" width="23" height="22" viewBox="0 0 23 22" fill="none"><path d="M12 3 H2.5 V13.5 H6" stroke="#a6a6a6" stroke-width="1.6"/><path d="M7 13 L16.5 3 C17.5 2 19.5 2 20 3 C20.5 4 20.5 5 19.5 6 L10 15.5 L6.5 16.5 Z" stroke="#a6a6a6" stroke-width="1.4" fill="#fff"/><rect x="1" y="16.5" width="20" height="4.5" fill="#b3b3b3"/></svg>
<div class="a" style="left:1466.93px;top:92.90px;font-size:15px;line-height:15px;color:#a6a6a6;font-weight:normal;font-family:'Liberation Sans',sans-serif;;transform-origin:0 0;transform:scaleX(0.9734);">Shape Outline</div>
<svg class="a" style="left:1564.0px;top:97.75px;" width="9" height="5.5" viewBox="0 0 9 5.5" fill="none"><path d="M1 1 L4.5 4.5 L8 1" stroke="#b5b5b5" stroke-width="1.1" stroke-linecap="round" stroke-linejoin="round"/></svg>
<svg class="a" style="left:1441px;top:122px;" width="23" height="19" viewBox="0 0 23 19" fill="none"><path d="M1.5 11 L6.5 2 H20.5 L15.5 11 Z" fill="#f3f3f3" stroke="#a6a6a6" stroke-width="1.5" stroke-linejoin="round"/><path d="M1.5 11 V14 L4 17 H13 L15.5 14 V11 M15.5 14 L20.5 5 V2" stroke="#a6a6a6" stroke-width="1.5" fill="#cfcfcf" stroke-linejoin="round"/></svg>
<div class="a" style="left:1466.94px;top:124.80px;font-size:15px;line-height:15px;color:#a6a6a6;font-weight:normal;font-family:'Liberation Sans',sans-serif;;transform-origin:0 0;transform:scaleX(0.9576);">Shape Effects</div>
<svg class="a" style="left:1561.0px;top:129.75px;" width="9" height="5.5" viewBox="0 0 9 5.5" fill="none"><path d="M1 1 L4.5 4.5 L8 1" stroke="#b5b5b5" stroke-width="1.1" stroke-linecap="round" stroke-linejoin="round"/></svg>
<div class="a" style="left:1327.74px;top:153.80px;font-size:13px;line-height:13px;color:#262626;font-weight:normal;font-family:'Liberation Sans',sans-serif;;transform-origin:0 0;transform:scaleX(1.0141);">Drawing</div>
<svg class="a" style="left:1576px;top:155.5px;" width="11" height="11" viewBox="0 0 11 11" fill="none"><path d="M0.5 9 V0.5 H9" stroke="#a0a0a0" stroke-width="1"/><path d="M3 3 L9.5 9.5 M5 9.5 H9.5 V5" stroke="#a0a0a0" stroke-width="1.1"/></svg>
<svg class="a" style="left:1605px;top:57px;" width="23" height="22" viewBox="0 0 23 22" fill="none"><circle cx="14.5" cy="7.5" r="6" stroke="#3a3a3a" stroke-width="1.5"/><path d="M10 12 L1.5 20.5" stroke="#3a3a3a" stroke-width="1.6"/></svg>
<div class="a" style="left:1630.66px;top:61.30px;font-size:15px;line-height:15px;color:#262626;font-weight:normal;font-family:'Liberation Sans',sans-serif;;transform-origin:0 0;transform:scaleX(0.9429);">Find</div>
<svg class="a" style="left:1605px;top:89px;" width="22" height="23" viewBox="0 0 22 23" fill="none"><path d="M9.5 1 V11 M9.5 7.5 C9.5 4.5 14.5 4.5 14.5 8 C14.5 11.5 9.5 11.5 9.5 8.5" stroke="#c2456b" stroke-width="1.4"/><path d="M5 8 C1 9.5 0.5 15 3.5 18 L8 18 M5.5 15.5 L8 18 L5.5 20.5" stroke="#3a90d6" stroke-width="1.5" stroke-linecap="round"/><path d="M19 15 C18 13 13.5 13 13.5 17 C13.5 21 18 21 19 19" stroke="#3a90d6" stroke-width="1.5"/></svg>
<div class="a" style="left:1630.64px;top:92.90px;font-size:15px;line-height:15px;color:#262626;font-weight:normal;font-family:'Liberation Sans',sans-serif;;transform-origin:0 0;transform:scaleX(0.9630);">Replace</div>
<svg class="a" style="left:1699.5px;top:97.25px;" width="9" height="5.5" viewBox="0 0 9 5.5" fill="none"><path d="M1 1 L4.5 4.5 L8 1" stroke="#333" stroke-width="1.2" stroke-linecap="round" stroke-linejoin="round"/></svg>
<svg class="a" style="left:1606px;top:121px;" width="18" height="23" viewBox="0 0 18 23" fill="none"><path d="M2.5 2 V18 L6.5 14.5 L9.5 21 L12.5 19.5 L9.5 13 H15 Z" stroke="#3a3a3a" stroke-width="1.5" stroke-linejoin="round"/></svg>
<div class="a" style="left:1630.64px;top:124.80px;font-size:15px;line-height:15px;color:#262626;font-weight:normal;font-family:'Liberation Sans',sans-serif;;transform-origin:0 0;transform:scaleX(0.9561);">Select</div>
<svg class="a" style="left:1676.0px;top:129.25px;" width="9" height="5.5" viewBox="0 0 9 5.5" fill="none"><path d="M1 1 L4.5 4.5 L8 1" stroke="#333" stroke-width="1.2" stroke-linecap="round" stroke-linejoin="round"/></svg>
<div class="a" style="left:1636.68px;top:153.80px;font-size:13px;line-height:13px;color:#262626;font-weight:normal;font-family:'Liberation Sans',sans-serif;;transform-origin:0 0;transform:scaleX(1.0158);">Editing</div>
<svg class="a" style="left:1744px;top:57px;" width="38" height="39" viewBox="0 0 38 39" fill="none"><rect x="2" y="2" width="34" height="35" stroke="#c5543e" stroke-width="2"/><rect x="6" y="6" width="11.5" height="11.5" stroke="#c5543e" stroke-width="1.8"/><rect x="20.5" y="6" width="11.5" height="11.5" stroke="#c5543e" stroke-width="1.8"/><rect x="6" y="21.5" width="11.5" height="11.5" stroke="#c5543e" stroke-width="1.8"/><rect x="20.5" y="21.5" width="11.5" height="11.5" stroke="#c5543e" stroke-width="1.8"/></svg>
<div class="a" style="left:1737.50px;top:101.80px;font-size:15px;line-height:15px;color:#262626;font-weight:normal;font-family:'Liberation Sans',sans-serif;;transform-origin:0 0;transform:scaleX(0.9980);">Add-ins</div>
<div class="a" style="left:1740.50px;top:153.80px;font-size:13px;line-height:13px;color:#262626;font-weight:normal;font-family:'Liberation Sans',sans-serif;;transform-origin:0 0;transform:scaleX(1.0000);">Add-ins</div>
<svg class="a" style="left:1884px;top:151px;" width="15" height="10" viewBox="0 0 15 10" fill="none"><path d="M1.5 1.5 L7.5 7.5 L13.5 1.5" stroke="#333" stroke-width="1.4"/></svg>
<div class="a" style="left:16.00px;top:195.26px;font-size:16px;line-height:16px;color:#3b3b3b;font-weight:normal;font-family:'Liberation Sans',sans-serif;;">1</div>
<div class="a" style="left:44px;top:197px;width:238px;height:135px;background:#fff;border:1px solid #c3c2c8;border-radius:4px"></div>
<div class="a" style="left:63.00px;top:210.93px;font-size:11.3px;line-height:11.3px;color:#111;font-weight:normal;font-family:'Liberation Serif',serif;letter-spacing:0.25px;transform-origin:0 0;transform:scaleX(1.0281);">Project Milestones</div>
<svg class="a" style="left:0;top:0" width="300" height="340" viewBox="0 0 300 340" fill="none">
<path d="M94 275.5 H106 M135 275.5 H143.5 M160 275.5 H169 M196.5 275.5 H209 M236 275.5 H248" stroke="#2d1a58" stroke-width="1.3"/>
<path d="M67 271 H91 L94.5 275.5 L91 280 H67 Z" fill="#2d1a58"/>
<path d="M109.5 270 H131.5 L135 276 L131.5 282 H109.5 L106 276 Z" fill="#2d1a58"/>
<path d="M146 272.8 H157.5 C160.5 272.8 160.5 278.3 157.5 278.3 H146 C143 278.3 143 272.8 146 272.8 Z" fill="#7b1c3c"/>
<path d="M172 269.8 H193.5 L196.5 275.3 L193.5 280.8 H172 L169 275.3 Z" fill="#2d1a58"/>
<path d="M212 269.8 H233 L236 275.3 L233 280.8 H212 L209 275.3 Z" fill="#2d1a58"/>
<rect x="248" y="273" width="15" height="5.2" fill="#7b1c3c"/>
<path d="M81.3 261 V271 M120.3 282 V290 M152.4 264 V269.5 M182.6 281.5 V289 M222.5 261 V270 M255.3 283 V288" stroke="#888" stroke-width="0.6"/>
<path d="M71 252.8 H91 M74 256 H88 M106 294.8 H134 M114 297.6 H127 M170 294.8 H195 M176 297.6 H190 M212 253.5 H232 M216 256.5 H228" stroke="#9a9a9a" stroke-width="0.9"/>
<ellipse cx="152.8" cy="246" rx="9.5" ry="6.5" fill="#e9e8f2"/>
<path d="M149 244.5 H156 M147.5 247.3 H158" stroke="#9a9a9a" stroke-width="0.8"/>
<ellipse cx="256" cy="303.5" rx="10.5" ry="7" fill="#e9e8f2"/>
<path d="M253 302 H259 M250.5 305 H261" stroke="#9a9a9a" stroke-width="0.8"/>
<path d="M79 274 H84 M80 277.5 H84 M118 274 H123 M118.5 277.5 H122.5 M180 274 H185 M180.5 277.5 H184.5 M220 274 H225 M220.5 277.5 H224.5" stroke="#cfc8e6" stroke-width="1"/>
</svg>
<div class="a" style="left:15.50px;top:355.66px;font-size:16px;line-height:16px;color:#b3362c;font-weight:normal;font-family:'Liberation Sans',sans-serif;;">2</div>
<div class="a" style="left:41px;top:354px;width:244px;height:141px;background:#fff;border:3px solid #b2302a;border-radius:7px"></div>
<div class="a" style="left:63.00px;top:371.23px;font-size:11.3px;line-height:11.3px;color:#111;font-weight:normal;font-family:'Liberation Serif',serif;letter-spacing:0.25px;transform-origin:0 0;transform:scaleX(1.0281);">Project Milestones</div>
<div class="a" style="left:309px;top:176px;width:1px;height:846px;background:#cdccd3"></div>
<div class="a" style="left:345px;top:187px;width:1522px;height:850px;background:#fff;border:1px solid #c4c3ca"></div>
<div class="a" style="left:461.93px;top:278.30px;font-size:71px;line-height:71px;color:#050505;font-weight:normal;font-family:'Liberation Serif',serif;letter-spacing:1px;-webkit-text-stroke:1.4px #050505;transform-origin:0 0;transform:scaleX(1.0734);">Project Milestones</div>
<div class="a" style="left:1899px;top:176px;width:21px;height:846px;background:#f1f0f5"></div>
<svg class="a" style="left:1903px;top:178px;" width="13" height="10" viewBox="0 0 13 10" fill="none"><path d="M6.5 1 L12 9 H1 Z" fill="#6d6c71" stroke="#6d6c71" stroke-width="1" stroke-linejoin="round"/></svg>
<div class="a" style="left:1904px;top:584px;width:11px;height:390px;background:#6e6d72;border-radius:6px"></div>
<svg class="a" style="left:1903px;top:980px;" width="13" height="9" viewBox="0 0 13 9" fill="none"><path d="M1 1 H12 L6.5 8.5 Z" fill="#6d6c71" stroke="#6d6c71" stroke-width="1" stroke-linejoin="round"/></svg>
<svg class="a" style="left:1903px;top:996px;" width="13" height="16" viewBox="0 0 13 16" fill="none"><path d="M1 7 L6.5 1 L12 7 Z M1 15 L6.5 8.5 L12 15 Z" fill="#6d6c71" stroke="#6d6c71" stroke-width="1" stroke-linejoin="round"/></svg>
<svg class="a" style="left:1903px;top:1018px;" width="13" height="6" viewBox="0 0 13 6" fill="none"><path d="M1 0 H12 L6.5 6 Z" fill="#6d6c71"/></svg>
<svg class="a" style="left:166.8px;top:25.8px;" width="26" height="34" viewBox="0 0 26 34" fill="none"><path d="M3.5 3 V28.5 L8.5 24 L12 31 L16.5 28.5 L13.5 21.5 H22.5 Z" fill="#f2f200" stroke="#000" stroke-width="1.6" stroke-linejoin="miter"/></svg>
</body></html>
